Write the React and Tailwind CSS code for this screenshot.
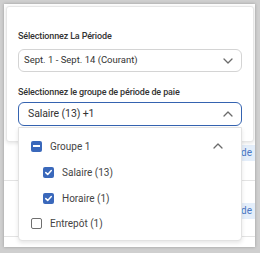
import React from 'react';

const Chevron = ({ up = false, className = '' }) => (
    <svg width="10" height="6" viewBox="0 0 10 6" className={className} fill="none" stroke="#6b6b6b" strokeWidth="1.3" strokeLinecap="round" strokeLinejoin="round">
        {up ? <path d="M1 5 L5 1 L9 5" /> : <path d="M1 1 L5 5 L9 1" />}
    </svg>
);

const Box = ({ state }) => {
    if (state === 'off') {
        return <div className="w-[11px] h-[11px] rounded-[2px] border-[1.5px] border-[#6f6f6f] bg-white" />;
    }
    return (
        <div className="w-[11px] h-[11px] rounded-[2px] bg-[#3a68bb] flex items-center justify-center">
            {state === 'mixed' ? (
                <div className="w-[7px] h-[1.5px] bg-white" />
            ) : (
                <svg width="9" height="9" viewBox="0 0 9 9" fill="none" stroke="white" strokeWidth="1.5" strokeLinecap="round" strokeLinejoin="round">
                    <path d="M1.8 4.6 L3.7 6.4 L7.3 2.6" />
                </svg>
            )}
        </div>
    );
};

const options = [
    { label: 'Salaire (13)', state: 'on' },
    { label: 'Horaire (1)', state: 'on' },
];

export default function App() {
    return (
        <div className="w-[260px] h-[253px] bg-[#cfcfcf] pl-[4px] pr-[5px] pt-[4px] pb-[6px]" style={{ fontFamily: 'Roboto, "Liberation Sans", sans-serif' }}>
            <div className="relative w-full h-full bg-white overflow-hidden shadow-[0_0_3px_rgba(0,0,0,0.25)]">
                {/* page behind the popover */}
                <div className="flex flex-col">
                    <div className="h-[141px]" />
                    <div className="h-[35px] flex items-start justify-end">
                        <div className="h-[16px] px-[3px] bg-[#e4eefa] text-[10px] text-[#4a78c4] leading-[16px]">Mode</div>
                    </div>
                    <div className="h-[56px] border-t border-[#e3e3e3] flex items-start justify-end">
                        <div className="mt-[22px] h-[16px] px-[3px] bg-[#e4eefa] text-[10px] text-[#4a78c4] leading-[16px]">Mode</div>
                    </div>
                    <div className="border-t border-[#e3e3e3]" />
                </div>

                {/* filter card */}
                <div className="absolute left-[2px] top-[2px] w-[248px] h-[136px] bg-white border border-[#e6e6e6] rounded-[3px] shadow-[0_1px_4px_rgba(0,0,0,0.12)] px-[11px] pt-[23px]">
                    <div className="text-[9px] tracking-[-0.15px] font-medium text-[#333] leading-[12px]">Sélectionnez La Période</div>
                    <div className="mt-[7px] h-[23px] w-[224px] border border-[#d4d4d4] rounded-[6px] flex items-center justify-between pl-[5px] pr-[8px]">
                        <span className="text-[9.5px] text-[#333]">Sept. 1 - Sept. 14 (Courant)</span>
                        <Chevron />
                    </div>
                    <div className="mt-[14px] text-[9px] tracking-[-0.15px] font-medium text-[#333] leading-[12px]">Sélectionnez le groupe de période de paie</div>
                    <div className="mt-[4px] h-[24px] w-[224px] border-[1.5px] border-[#3563b0] rounded-[6px] flex items-center justify-between pl-[9px] pr-[8px]">
                        <span className="text-[10.5px] tracking-[-0.1px] text-[#333]">Salaire (13) +1</span>
                        <Chevron up />
                    </div>
                </div>

                {/* dropdown list */}
                <div className="absolute left-[14px] top-[123px] w-[224px] h-[114px] bg-white border border-[#e2e2e2] rounded-b-[4px] shadow-[0_2px_4px_rgba(0,0,0,0.1)] flex flex-col pt-[13px] text-[10px] text-[#444]">
                    <div className="h-[10px] flex items-center pl-[12px] pr-[18px]">
                        <Box state="mixed" />
                        <span className="ml-[8px]">Groupe 1</span>
                        <Chevron up className="ml-auto" />
                    </div>
                    {options.map((o) => (
                        <div key={o.label} className="mt-[16px] h-[10px] flex items-center pl-[24px]">
                            <Box state={o.state} />
                            <span className="ml-[8px]">{o.label}</span>
                        </div>
                    ))}
                    <div className="mt-[15px] h-[10px] flex items-center pl-[12px]">
                        <Box state="off" />
                        <span className="ml-[8px]">Entrepôt (1)</span>
                    </div>
                </div>
            </div>
        </div>
    );
}
